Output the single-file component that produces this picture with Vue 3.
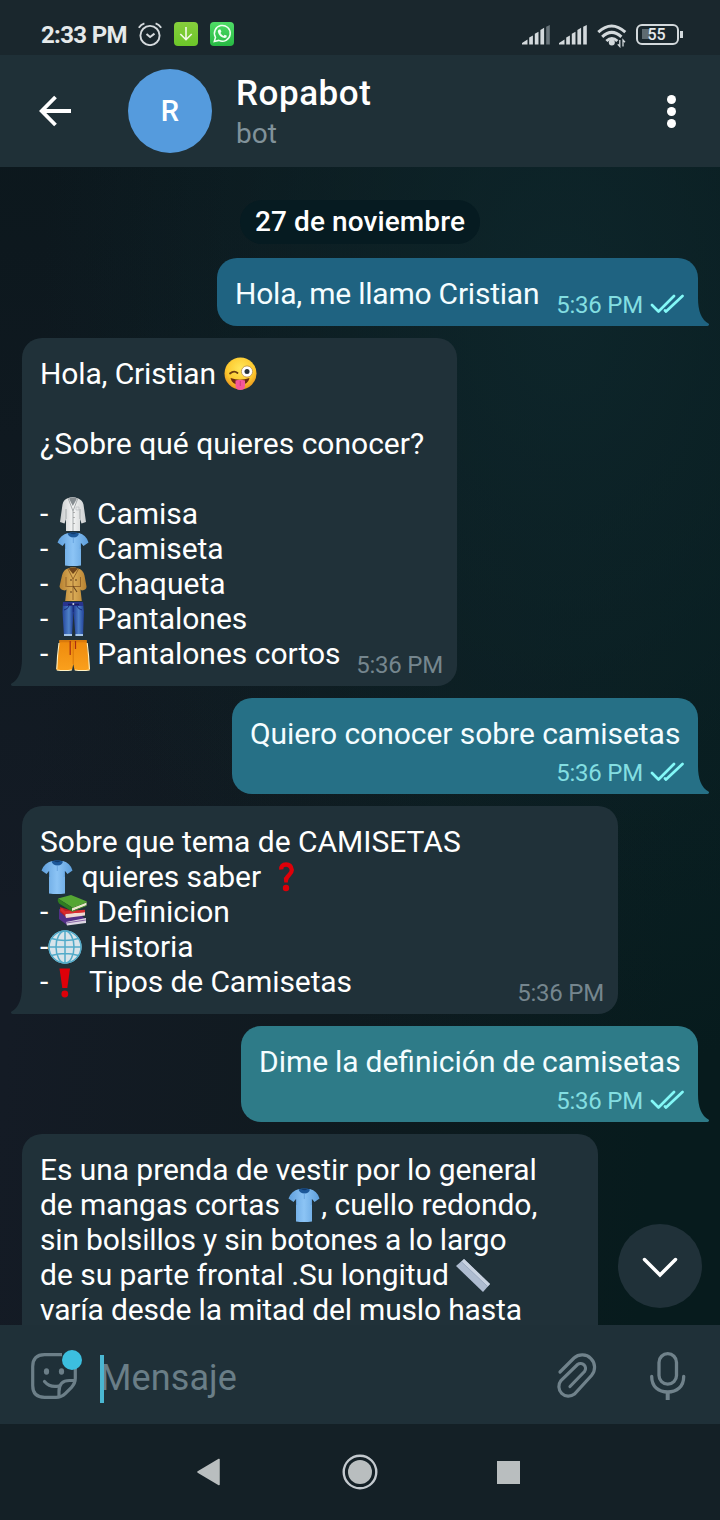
<script setup>
// ls / ws: letter and word spacing of a line, in px
const messages = [
  { side: 'out', width: 481, tone: 'a', lines: [{ parts: ['Hola, me llamo Cristian'], ls: -0.22 }] },
  {
    side: 'in', width: 435,
    lines: [
      { parts: ['Hola, Cristian ', { e: 'wink' }], ls: -0.14 },
      { parts: [' '] },
      { parts: ['¿Sobre qué quieres conocer?'] },
      { parts: [' '] },
      { parts: ['- ', { e: 'coat' }, ' Camisa'], ls: -0.06 },
      { parts: ['- ', { e: 'shirt' }, ' Camiseta'], ls: -0.06 },
      { parts: ['- ', { e: 'trench' }, ' Chaqueta'], ls: 0.05 },
      { parts: ['- ', { e: 'jeans' }, ' Pantalones'] },
      { parts: ['- ', { e: 'shorts' }, ' Pantalones cortos'] },
    ],
  },
  { side: 'out', width: 466, tone: 'b', stacked: true, lines: [{ parts: ['Quiero conocer sobre camisetas'], ls: -0.05 }] },
  {
    side: 'in', width: 596,
    lines: [
      { parts: ['Sobre que tema de CAMISETAS'] },
      { parts: [{ e: 'shirt' }, ' quieres saber ', { e: 'question' }], ls: -0.04 },
      { parts: ['- ', { e: 'books' }, ' Definicion'] },
      { parts: ['-', { e: 'globe' }, ' Historia'], ls: -0.08 },
      { parts: ['-', { e: 'exclaim' }, ' Tipos de Camisetas'], ls: -0.1 },
    ],
  },
  { side: 'out', width: 457, tone: 'c', stacked: true, lines: [{ parts: ['Dime la definición de camisetas'], ws: -0.6 }] },
  {
    side: 'in', width: 576, open: true,
    lines: [
      { parts: ['Es una prenda de vestir por lo general'], ls: -0.07 },
      { parts: ['de mangas cortas ', { e: 'shirt' }, ', cuello redondo,'], ls: -0.06 },
      { parts: ['sin bolsillos y sin botones a lo largo'], ls: -0.17 },
      { parts: ['de su parte frontal .Su longitud ', { e: 'ruler' }], ls: -0.03 },
      { parts: ['varía desde la mitad del muslo hasta'], ls: -0.17 },
    ],
  },
]
const time = '5:36 PM'

function spacing(line) {
  const style = {}
  if (line.ls) style.letterSpacing = line.ls + 'px'
  if (line.ws) style.wordSpacing = line.ws + 'px'
  return style
}
</script>

<template>
  <div class="screen">
    <svg class="defs" width="0" height="0" aria-hidden="true">
      <defs>
        <radialGradient id="g-face" cx=".5" cy=".35" r=".65">
          <stop offset="0" stop-color="#ffe75a" /><stop offset=".65" stop-color="#fdc92f" /><stop offset="1" stop-color="#e8931c" />
        </radialGradient>
        <linearGradient id="g-coat"><stop offset="0" stop-color="#c9cccd" /><stop offset=".5" stop-color="#f4f5f5" /><stop offset="1" stop-color="#cbcecf" /></linearGradient>
        <linearGradient id="g-shirt"><stop offset="0" stop-color="#5f9fdc" /><stop offset=".5" stop-color="#8cc4f5" /><stop offset="1" stop-color="#5d9edb" /></linearGradient>
        <linearGradient id="g-trench"><stop offset="0" stop-color="#b78131" /><stop offset=".5" stop-color="#dcae59" /><stop offset="1" stop-color="#b78131" /></linearGradient>
        <linearGradient id="g-jeans"><stop offset="0" stop-color="#26479d" /><stop offset=".3" stop-color="#4f83c8" /><stop offset=".5" stop-color="#1f3990" /><stop offset=".75" stop-color="#4c7fc7" /><stop offset="1" stop-color="#23439a" /></linearGradient>
        <linearGradient id="g-shorts" x2="0" y2="1"><stop offset="0" stop-color="#ee8a0c" /><stop offset="1" stop-color="#faa01d" /></linearGradient>
        <linearGradient id="g-down" x2="0" y2="1"><stop offset="0" stop-color="#86cf3c" /><stop offset="1" stop-color="#6cc629" /></linearGradient>
        <linearGradient id="g-wa" x2="0" y2="1"><stop offset="0" stop-color="#4fdc66" /><stop offset="1" stop-color="#27b943" /></linearGradient>
      </defs>
      <symbol id="wink" viewBox="0 0 34 34">
        <circle cx="17.500" cy="16.500" r="16" fill="url(#g-face)" />
        <path d="M7.500 21q9.500 3.500 19 0q-1.500 7-9.500 7t-9.500-7z" fill="#6b2a10" />
        <path d="M12.500 23.500q4.500-1.500 9.500 0v5q0 4.500-4.700 4.500t-4.800-4.500z" fill="#f4579a" />
        <path d="M17.300 24v5" stroke="#d33b7c" stroke-width="1" />
        <path d="M7 16.500q4-3.500 7.500-.5" fill="none" stroke="#6b3c10" stroke-width="1.800" stroke-linecap="round" />
        <circle cx="24" cy="14.500" r="5.600" fill="#fff" stroke="#b98b45" stroke-width=".8" />
        <circle cx="24" cy="14.500" r="2.500" fill="#27323a" />
      </symbol>
      <symbol id="coat" viewBox="0 0 34 34">
        <path d="M11 1.500Q17-1 22 1.500q4.500 1.500 5.500 6l2.500 17.500-4.500 1.500L24 22v12H10V22l-1.500 4.500L4 25 6.500 7.500q.8-4.500 4.500-6z" fill="url(#g-coat)" />
        <path d="M12 1l5 13 5-13M17 14v20M10 12v10M24 12v10" fill="none" stroke="#a4a9ab" stroke-width="1" />
        <path d="M13 1.500l3.800 7.500L21 1.500q-4-2-8 0z" fill="#868d91" />
        <path d="M20 10h3v3h-3z" fill="none" stroke="#b7bbbc" stroke-width=".6" />
        <path d="M18 15v.8M18 20v.8M18 26v.8" stroke="#777" stroke-width="1.300" />
      </symbol>
      <symbol id="shirt" viewBox="0 0 34 34">
        <path d="M12 1h11q7 1.500 9.500 9.500l-5 3.500-2.500-3v22.500q-8 1-16 0V11l-2.500 3-5-3.500Q4.500 2.500 12 1z" fill="url(#g-shirt)" />
        <path d="M11.500 1.500Q17-1 23 1.500q-1 4-5.500 4t-6-4z" fill="#1d5899" />
        <path d="M14 1.300q3.500-1.300 6.500 0-3 2-6.500 0z" fill="#123a6b" />
        <path d="M17.300 5v6M9.300 11l.3 6M24.500 11l-.3 6" stroke="#5a98d6" stroke-width=".7" fill="none" />
      </symbol>
      <symbol id="trench" viewBox="0 0 34 34">
        <path d="M12 1.500q5-2.500 10 0 5 1 6.500 7l2 11q.2 3.500-4.500 4l-1.500-1 1.300 11.500H9.200L10.500 22.500l-1.500 1q-5-.5-5.500-4l2.500-11q1.500-6 6-7z" fill="url(#g-trench)" />
        <path d="M12.500 1.500q5-2 9.500 0l-5 5.500z" fill="#70451b" />
        <path d="M12 2l5 10 5.500-10M17 11v22M10.500 19.500h13.500M10 10v10M24.500 10v10" fill="none" stroke="#95652a" stroke-width="1" />
        <path d="M17 19l4 6M15 12v2M20 12v2M15 24v2" stroke="#69451f" stroke-width="1.100" />
      </symbol>
      <symbol id="jeans" viewBox="0 0 34 34">
        <path d="M7 0h20l1 10-1 24h-7.500L17.500 10 16 34H8L6.500 10z" fill="url(#g-jeans)" />
        <path d="M7 0h20v4H7z" fill="#28348f" /><path d="M12 2.500h11" stroke="#181d61" stroke-width="1.500" />
        <path d="M8 32h8v2H8zM19.500 32H27v2h-7.500z" fill="#a4c5e8" />
        <path d="M17.300 2v8M8 8q4-1 5-4M26 8q-4-1-5-4" fill="none" stroke="#182b7b" />
        <circle cx="17.300" cy="2" r="1" fill="#cbd3dc" />
      </symbol>
      <symbol id="shorts" viewBox="0 0 34 34">
        <path d="M3.500 3h27L34 33q-8 1.500-15.500 0L17.300 27 16 33q-8 1.500-15.700 0z" fill="url(#g-shorts)" />
        <path d="M.8 33q7.500 1.200 15 0M18.800 33q7.500 1.200 14.800 0M3 6Q1.300 18 .8 32M31.200 6q1.600 12 2.200 26" fill="none" stroke="#fff2c4" stroke-width="1.100" />
        <path d="M3.500 3h27v2.300h-27z" fill="#d97a0c" />
        <path d="M14.200 4v14M19.500 4v8" stroke="#a92b10" stroke-width="1.200" fill="none" /><path d="M17.200 6v21" stroke="#d87709" />
      </symbol>
      <symbol id="question" viewBox="0 0 34 34">
        <path d="M12.300 9.500Q12 4.500 17 4.500T22.800 10c0 5-6 5.500-5.800 10.500" fill="none" stroke="#de0009" stroke-width="4.300" />
        <path d="M14.800 17.500h4.500l-.5 5h-3.500z" fill="#de0009" /><circle cx="17" cy="28" r="3.200" fill="#de0009" />
      </symbol>
      <symbol id="exclaim" viewBox="0 0 34 34">
        <path d="M11.500 3.500h10.500l-2.700 19.500h-5z" fill="#de0009" /><circle cx="16.800" cy="29" r="3.400" fill="#de0009" />
      </symbol>
      <symbol id="books" viewBox="0 0 34 34">
        <path d="M3 14l21 5 6 6-19 5-8-6z" fill="#532f87" /><path d="M10 27l20-4v5l-19 2.500z" fill="#ddd7e3" /><path d="M10 28l20-3" stroke="#8b69a7" />
        <path d="M4 12l16 5 9 0v2L11 23l-7-6z" fill="#b91e25" /><path d="M9 19l20-2v3.500L10 23z" fill="#efd8d2" /><path d="M5 14l5 5M8 17.500l21-1.500" stroke="#d92b2d" stroke-width="2.600" />
        <path d="M2 3.500L15 0l16 6.500-14 6.500z" fill="#55a633" /><path d="M2 3.500l14 9v4L3 8.500Q1 5.500 2 3.500z" fill="#2f7d21" /><path d="M16 12.500L30.500 7v3.500L16 16z" fill="#eee7cf" />
        <path d="M16 12.800L31 7M16 16.500l14.500-6" stroke="#458d2b" />
      </symbol>
      <symbol id="globe" viewBox="0 0 34 34">
        <circle cx="17" cy="17" r="16.500" fill="#d8e4ea" />
        <g fill="none" stroke="#52abc9" stroke-width="1.500">
          <circle cx="17" cy="17" r="16" /><ellipse cx="17" cy="17" rx="9" ry="16" /><path d="M17 1v32M1 17h32M3.500 8.500q13.500 4 27 0M3.500 25.500q13.500-4 27 0" />
        </g>
      </symbol>
      <symbol id="ruler" viewBox="0 0 34 34">
        <path d="M8 1L34 26l-7 8L0 8z" fill="#aebcd0" /><path d="M8 1l26 25-2.300 2.600L5.500 3.800z" fill="#c9d3e1" /><path d="M5.500 3.800l26.200 24.800" stroke="#9babc2" stroke-width="1" />
      </symbol>
    </svg>

    <div class="status">
      <span class="clock">2:33 PM</span>
      <svg class="alarm" width="24" height="24" viewBox="0 0 24 24" fill="none" stroke="#d5dadd">
        <circle cx="12" cy="13.500" r="9.600" stroke-width="1.900" /><path d="M8.500 12l3.600 3 4.400-3.400" stroke-width="2" /><path d="M.8 5.700Q3 2.500 6.400 1.400M23.200 5.700Q21 2.500 17.600 1.400" stroke-width="1.900" />
      </svg>
      <svg class="app" width="24" height="24" viewBox="0 0 24 24"><rect width="24" height="24" rx="4" fill="url(#g-down)" /><path d="M12 5v12.500M6.300 12l5.700 5.700 5.700-5.700" fill="none" stroke="#f2fbe8" stroke-width="1.600" /></svg>
      <svg class="app" width="24" height="24" viewBox="0 0 24 24"><rect width="24" height="24" rx="4" fill="url(#g-wa)" /><path d="M4.300 19.500l1.200-4.200A7.900 7.900 0 1 1 8.800 18.400z" fill="none" stroke="#f0fff2" stroke-width="1.500" /><path d="M9 7.500l1.500 0 .9 2.200-.9 1.300q1.100 2 3 2.900l1.200-1.200 2.200 1.100q0 2.200-2.300 2.300Q9 15 7.800 9.500 8 8 9 7.500z" fill="#f0fff2" /></svg>
      <span class="spacer"></span>
      <svg class="signal" width="28" height="20" viewBox="0 0 28 20" fill="#d3d9dc"><path d="M0 19.500v-1.500L5.500 14.500v5zM7.200 12.500l3.700-2v9H7.200zM12.800 8.700l3.700-2v12.800h-3.700zM18.400 5l3.700-2.300v16.800h-3.700z" /><path d="M24.200 1.800l3.600-1.800v19.500h-3.600z" fill="#69757b" /></svg>
      <svg class="signal" width="28" height="20" viewBox="0 0 28 20" fill="#d3d9dc"><path d="M0 19.500v-1.500L5.500 14.500v5zM7.200 12.500l3.700-2v9H7.200zM12.800 8.700l3.700-2v12.800h-3.700zM18.400 5l3.700-2.300v16.800h-3.700zM24.200 1.800l3.600-1.800v19.500h-3.600z" /></svg>
      <svg class="wifi" width="30" height="24" viewBox="0 0 30 24">
        <g fill="none" stroke="#d3d9dc" stroke-width="3"><path d="M1.300 8.200q13.200-12.300 27 0M5.200 12.800q9.500-9 19.200 0M9.400 17q5.500-5 11 0" /></g><circle cx="14.800" cy="18.500" r="3" fill="#d3d9dc" />
        <path d="M22.800 16v6.500l-2-2.200M26 22.500V16l2 2.200" fill="none" stroke="#d3d9dc" stroke-width="1.300" />
      </svg>
      <div class="battery"><span class="charge"></span><span class="pct">55</span></div><span class="nub"></span>
    </div>

    <header class="header">
      <svg class="back" width="34" height="32" viewBox="0 0 34 32" fill="none" stroke="#fff" stroke-width="3.800"><path d="M32 16H3M16.500 2L2.700 16l13.800 14" /></svg>
      <div class="avatar">R</div>
      <div class="who"><div class="name">Ropabot</div><div class="kind">bot</div></div>
      <div class="menu"><i></i><i></i><i></i></div>
    </header>

    <main class="chat">
      <div class="date">27 de noviembre</div>
      <div v-for="(m, i) in messages" :key="i" class="bubble" :class="[m.side, m.tone, { stacked: m.stacked, open: m.open }]" :style="{ width: m.width + 'px' }">
        <div class="text">
          <div v-for="(line, j) in m.lines" :key="j" class="line" :style="spacing(line)"><template v-for="(p, k) in line.parts" :key="k"><svg v-if="p.e" class="emoji"><use :href="'#' + p.e" /></svg><template v-else>{{ p }}</template></template></div>
        </div>
        <div v-if="!m.open" class="meta">
          <span>{{ time }}</span>
          <svg v-if="m.side === 'out'" class="checks" width="34" height="20" viewBox="0 0 34 20" fill="none" stroke="#83f8f7" stroke-width="2.700" stroke-linecap="round" stroke-linejoin="round"><path d="M2 11l6.500 6.500L24 2M16 17.500L32.500 2M16 17.500l-1-1" /></svg>
        </div>
        <svg v-if="!m.open" class="tail" width="12" height="28" viewBox="0 0 12 28"><path d="M0 0Q0 20 10.500 25.500 12 27 9.500 28H0z" /></svg>
      </div>
      <button class="down" aria-label="Bajar"><svg width="36" height="22" viewBox="0 0 36 22" fill="none" stroke="#fff" stroke-width="3.500" stroke-linecap="round"><path d="M2.500 2.500L18 18 33.500 2.500" /></svg></button>
    </main>

    <div class="composer">
      <div class="sticker">
        <svg width="46" height="46" viewBox="0 0 46 46" fill="none" stroke="#6c7f88" stroke-width="3.200">
          <path d="M31 1.700H13.500Q1.700 1.700 1.700 13.500v19Q1.700 44.300 13.500 44.300H25q5.500 0 9.500-4l6-6q3.800-4 3.800-9V14" />
          <path d="M28 44v-5.500Q28 27.500 38.500 27.500H44" /><path d="M13.500 28.500q5.500 6.500 14.500 4.500" stroke-linecap="round" />
          <ellipse cx="15.500" cy="18.500" rx="2.600" ry="3.200" fill="#6c7f88" stroke="none" /><ellipse cx="30.500" cy="18.500" rx="2.600" ry="3.200" fill="#6c7f88" stroke="none" />
        </svg>
        <span class="dot"></span>
      </div>
      <div class="field"><span class="caret"></span><span class="placeholder">Mensaje</span></div>
      <svg class="clip" width="42" height="48" viewBox="0 0 42 48" fill="none" stroke="#70828b" stroke-width="3.200" stroke-linecap="round"><path d="M5 20L19 6a12.400 12.400 0 0 1 17.500 17.500L19.500 42A9.600 9.600 0 0 1 6 28.500L22.500 12.500a5 5 0 0 1 7 7L15 34.500" /></svg>
      <svg class="mic" width="36" height="48" viewBox="0 0 36 48" fill="none" stroke="#70828b" stroke-width="3.300"><rect x="9" y="1.700" width="17.500" height="30.500" rx="8.750" /><path d="M1.700 24.500q0 7.500 4.500 11.500t11.500 4 11.500-4 4.500-11.500" stroke-linecap="round" /><path d="M17.700 40v8" stroke-width="4" /></svg>
    </div>

    <nav class="nav">
      <svg width="24" height="28" viewBox="0 0 24 28"><path d="M1 14L22 1.500v25z" fill="#b9bebf" stroke="#b9bebf" stroke-width="1.500" stroke-linejoin="round" /></svg>
      <svg class="home" width="36" height="36" viewBox="0 0 36 36"><circle cx="18" cy="18" r="16.300" fill="none" stroke="#c3c9ce" stroke-width="2.400" /><circle cx="18" cy="18" r="12" fill="#b9bebf" /></svg>
      <span class="recent"></span>
    </nav>
  </div>
</template>

<style>
body { margin: 0; background: #142026; }
</style>

<style scoped>
* { box-sizing: border-box; }
.screen { width: 720px; height: 1520px; display: flex; flex-direction: column; overflow: hidden; font-family: Roboto, "Liberation Sans", sans-serif; color: #fff; }
.defs { position: absolute; }
svg { display: block; flex: none; }

.status { height: 55px; flex: none; display: flex; align-items: flex-start; padding: 22px 37px 0 41px; background: #1a272d; }
.clock { width: 97px; font-size: 24px; line-height: 26px; font-weight: 700; letter-spacing: -.65px; color: #e5e9ea; white-space: nowrap; }
.alarm { margin-right: 12px; }
.app { margin-right: 12px; }
.spacer { flex: 1; }
.signal { margin: 3px 9px 0 0; }
.wifi { margin: 2px 9px 0 1px; }
.battery { position: relative; width: 43px; height: 21px; margin-top: 2px; border: 2.500px solid #d3d9dc; border-radius: 6px; display: flex; justify-content: center; align-items: center; }
.charge { position: absolute; left: 4px; top: 3px; width: 8px; height: 10px; background: #5e6b71; }
.pct { position: relative; left: -1px; font-size: 16px; font-weight: 500; line-height: 16px; color: #e6eaec; }
.nub { width: 3px; height: 7px; margin: 9px 0 0 1px; background: #d3d9dc; }

.header { height: 112px; flex: none; display: flex; align-items: center; padding: 0 42px 0 39px; background: #1f3037; }
.avatar { width: 84px; height: 84px; margin-left: 55px; border-radius: 50%; background: #559bdd; display: flex; align-items: center; justify-content: center; font-size: 29px; font-weight: 500; }
.who { flex: 1; margin-left: 24px; padding-top: 1px; }
.name { font-size: 35px; line-height: 42px; font-weight: 500; letter-spacing: .55px; }
.kind { font-size: 28px; line-height: 33px; color: #81929a; margin-top: 2px; }
.menu { width: 13px; display: flex; flex-direction: column; align-items: center; gap: 3px; }
.menu i { width: 9px; height: 9px; border-radius: 50%; background: #fff; }

.chat { position: relative; flex: 1; min-height: 0; overflow: hidden; display: flex; flex-direction: column; gap: 12px; padding: 33px 22px 0; background: radial-gradient(ellipse 520px 780px at 78% 12%, rgba(14, 39, 44, .9), rgba(14, 39, 44, 0)), linear-gradient(180deg, rgba(8, 22, 25, .65), rgba(8, 22, 25, 0) 65%), linear-gradient(95deg, #141b25 10%, #101a20 45%, #071b1d 90%); }
.date { align-self: center; width: 240px; height: 44px; flex: none; margin-bottom: 2px; border-radius: 22px; background: #061b21; text-align: center; font-size: 28px; line-height: 43px; font-weight: 500; letter-spacing: .1px; white-space: nowrap; }
.bubble { position: relative; flex: none; display: grid; border-radius: 20px; }
.text { grid-area: 1 / 1; padding: 18px 0 15px 18px; font-size: 30px; line-height: 35px; }
.line { height: 35px; white-space: pre; }
.emoji { display: inline-block; width: 34px; height: 34px; vertical-align: -7px; }
.meta { grid-area: 1 / 1; align-self: end; justify-self: end; display: flex; gap: 7px; margin: 0 14px 7px 0; font-size: 24px; line-height: 28px; letter-spacing: -.22px; color: #75868e; }
.checks { margin-top: 3px; }
.in { align-self: flex-start; background: #203139; border-bottom-left-radius: 0; color: #fff; }
.out { align-self: flex-end; border-bottom-right-radius: 0; color: #f4fdff; }
.out .meta { color: #83dee1; }
.a { background: #1f6381; }
.b { background: #267086; }
.c { background: #2e7b88; }
.stacked .text { padding-bottom: 43px; }
.open { border-bottom-right-radius: 0; }
.tail { position: absolute; bottom: 0; }
.out .tail { left: 100%; }
.in .tail { right: 100%; transform: scaleX(-1); }
.in .tail path { fill: #203139; }
.a .tail path { fill: #1f6381; }
.b .tail path { fill: #267086; }
.c .tail path { fill: #2e7b88; }
.down { position: absolute; right: 18px; bottom: 17px; width: 84px; height: 84px; padding: 4px 0 0; border: 0; border-radius: 50%; background: #203139; display: flex; align-items: center; justify-content: center; }

.composer { height: 99px; flex: none; display: flex; align-items: flex-start; padding: 27px 34px 0 31px; background: #1f3038; }
.sticker { position: relative; width: 46px; margin-top: 1px; }
.dot { position: absolute; left: 31px; top: -3px; width: 20px; height: 20px; border-radius: 50%; background: #3cbfdf; }
.field { position: relative; flex: 1; margin-left: 23px; height: 50px; }
.caret { position: absolute; left: 0; top: 3px; width: 4px; height: 48px; background: #4ab7d2; }
.placeholder { display: block; font-size: 36px; line-height: 52px; letter-spacing: .1px; color: #6a7e87; }
.clip { margin-right: 53px; }
.nav { height: 96px; flex: none; display: flex; align-items: center; justify-content: space-between; padding: 0 200px 0 197px; background: #142026; }
.home { position: relative; left: .5px; }
.recent { width: 23px; height: 23px; background: #b9bebf; }
</style>
